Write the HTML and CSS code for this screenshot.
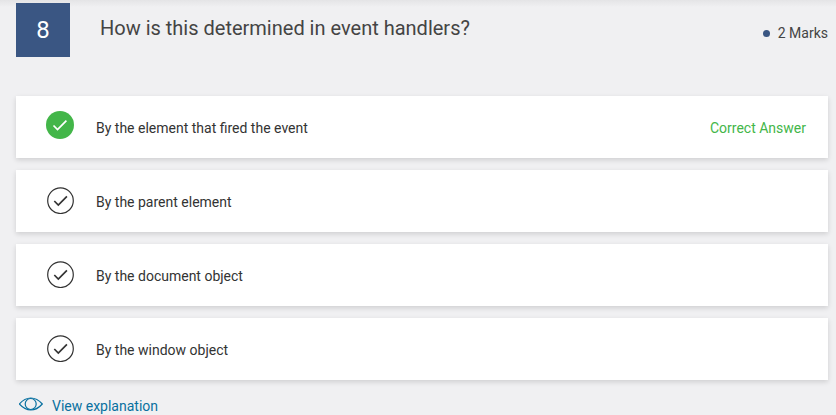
FILE: index.html
```html
<!DOCTYPE html>
<html lang="en">
<head>
<meta charset="utf-8">
<title>Question 8</title>
<link rel="stylesheet" href="styles.css">
</head>
<body>
<main class="question">
  <header class="head">
    <div class="number">8</div>
    <h1 class="title">How is this determined in event handlers?</h1>
    <div class="marks"><span class="dot"></span>2 Marks</div>
  </header>
  <ul class="options">
    <li class="option correct">
      <svg class="check" viewBox="0 0 28 28"><circle cx="14" cy="14" r="14"/><path d="M7.500 14.500l4 4 8.900-8.900"/></svg>
      <span class="label">By the element that fired the event</span>
      <span class="status">Correct Answer</span>
    </li>
    <li class="option">
      <svg class="check" viewBox="0 0 28 28"><circle cx="14.500" cy="14.700" r="12.800"/><path d="M8.300 15l4 4 8.600-8.600"/></svg>
      <span class="label">By the parent element</span>
    </li>
    <li class="option">
      <svg class="check" viewBox="0 0 28 28"><circle cx="14.500" cy="14.700" r="12.800"/><path d="M8.300 15l4 4 8.600-8.600"/></svg>
      <span class="label">By the document object</span>
    </li>
    <li class="option">
      <svg class="check" viewBox="0 0 28 28"><circle cx="14.500" cy="14.700" r="12.800"/><path d="M8.300 15l4 4 8.600-8.600"/></svg>
      <span class="label">By the window object</span>
    </li>
  </ul>
  <a class="explain">
    <svg class="eye" viewBox="0 0 24 14"><path d="M.3 7Q5.500 1 11.800 1T23.300 7Q18 13 11.800 13T.3 7z"/><circle cx="11.700" cy="7" r="5.500"/></svg>
    View explanation
  </a>
</main>
</body>
</html>
```

FILE: styles.css
```css
* { box-sizing: border-box; }
body { margin: 0; background: linear-gradient(#e4e4e6, #f0f0f2 7px) #f0f0f2 no-repeat; font: 14px/20px Roboto, sans-serif; color: #333; height: 415px; overflow: hidden; }
.question { padding: 3px 8px 0 16px; }
.head { display: flex; height: 54px; }
.number { width: 54px; height: 54px; background: #3a5683; color: #fff; font-size: 24px; line-height: 54px; text-align: center; }
.title { margin: 11px 0 0 30px; font-size: 20px; line-height: 28px; font-weight: 400; color: #444; }
.marks { margin: 20px 0 0 auto; display: flex; align-items: center; height: 20px; gap: 8px; color: #444; }
.dot { width: 7px; height: 7px; border-radius: 50%; background: #3a5683; }
.options { list-style: none; margin: 39px 0 0; padding: 0; display: grid; gap: 12px; }
.option { height: 62px; display: flex; align-items: center; padding: 2px 22px 0 30px; background: #fff; box-shadow: 0 2px 5px rgba(0,0,0,.14); }
.check { width: 28px; height: 28px; margin: 0 22px 4px 0; fill: none; stroke: #333; stroke-width: 1.2; }
.check path { stroke-width: 1.7; }
.correct .check { margin-bottom: 6px; stroke: #fff; }
.correct circle { fill: #43b649; stroke: none; }
.status { margin-left: auto; color: #43b649; }
.explain { display: flex; align-items: center; margin-top: 16px; padding-left: 3px; gap: 9px; color: #0870a0; }
.eye { width: 24px; height: 14px; margin-bottom: 4px; fill: none; stroke: currentColor; stroke-width: 1.2; }
```
